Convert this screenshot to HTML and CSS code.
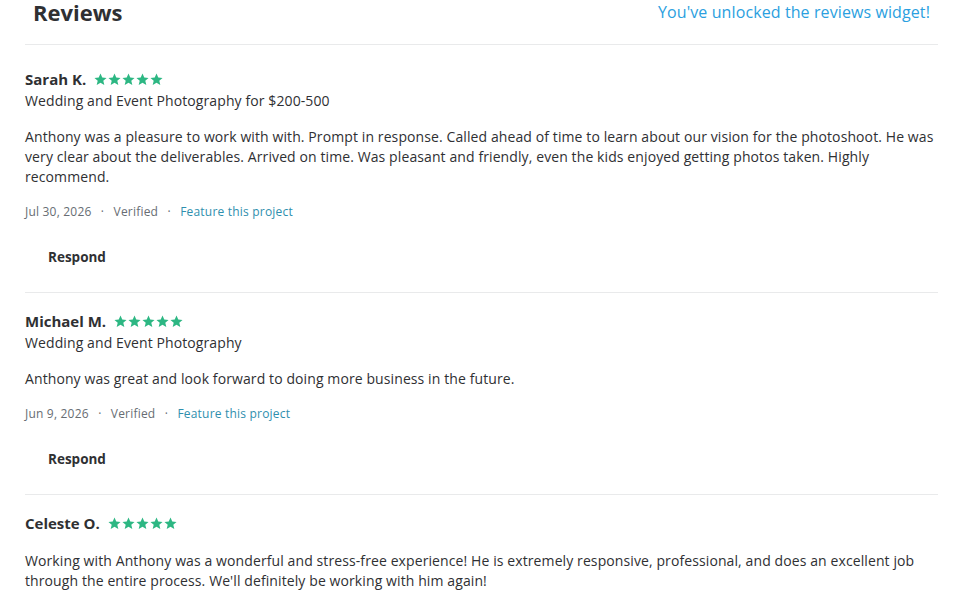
FILE: index.html
```html
<!DOCTYPE html>
<html lang="en">

<head>
  <meta charset="UTF-8">
  <meta name="viewport" content="width=device-width, initial-scale=1.0">
  <title>Reviews</title>
  <link rel="stylesheet" href="styles.css">
</head>

<body>
  <svg width="0" height="0" class="defs">
    <defs>
      <path id="star" d="M7 0.6l1.9 4.3 4.6 0.4-3.5 3 1.1 4.6L7 10.5 2.9 12.9 4 8.3 0.5 5.3l4.6-0.4z" />
    </defs>
  </svg>

  <div class="page">
    <div class="header">
      <h1>Reviews</h1>
      <span class="unlocked">You've unlocked the reviews widget!</span>
    </div>

    <div class="review first">
      <div class="name-row">
        <span class="name">Sarah K.</span>
        <span class="stars">
          <svg viewBox="0 0 14 14"><use href="#star" /></svg>
          <svg viewBox="0 0 14 14"><use href="#star" /></svg>
          <svg viewBox="0 0 14 14"><use href="#star" /></svg>
          <svg viewBox="0 0 14 14"><use href="#star" /></svg>
          <svg viewBox="0 0 14 14"><use href="#star" /></svg>
        </span>
      </div>
      <div class="service">Wedding and Event Photography for $200-500</div>
      <p class="text">Anthony was a pleasure to work with with. Prompt in response. Called ahead of time to learn about our vision for the photoshoot. He was very clear about the deliverables. Arrived on time. Was pleasant and friendly, even the kids enjoyed getting photos taken. Highly recommend.</p>
      <div class="meta">
        <span>Jul 30, 2026</span>
        <span class="dot">·</span>
        <span>Verified</span>
        <span class="dot">·</span>
        <a href="#">Feature this project</a>
      </div>
      <button class="respond">Respond</button>
    </div>

    <div class="review">
      <div class="name-row">
        <span class="name">Michael M.</span>
        <span class="stars">
          <svg viewBox="0 0 14 14"><use href="#star" /></svg>
          <svg viewBox="0 0 14 14"><use href="#star" /></svg>
          <svg viewBox="0 0 14 14"><use href="#star" /></svg>
          <svg viewBox="0 0 14 14"><use href="#star" /></svg>
          <svg viewBox="0 0 14 14"><use href="#star" /></svg>
        </span>
      </div>
      <div class="service">Wedding and Event Photography</div>
      <p class="text">Anthony was great and look forward to doing more business in the future.</p>
      <div class="meta">
        <span>Jun 9, 2026</span>
        <span class="dot">·</span>
        <span>Verified</span>
        <span class="dot">·</span>
        <a href="#">Feature this project</a>
      </div>
      <button class="respond">Respond</button>
    </div>

    <div class="review">
      <div class="name-row">
        <span class="name">Celeste O.</span>
        <span class="stars">
          <svg viewBox="0 0 14 14"><use href="#star" /></svg>
          <svg viewBox="0 0 14 14"><use href="#star" /></svg>
          <svg viewBox="0 0 14 14"><use href="#star" /></svg>
          <svg viewBox="0 0 14 14"><use href="#star" /></svg>
          <svg viewBox="0 0 14 14"><use href="#star" /></svg>
        </span>
      </div>
      <p class="text">Working with Anthony was a wonderful and stress-free experience! He is extremely responsive, professional, and does an excellent job through the entire process. We'll definitely be working with him again!</p>
    </div>
  </div>
</body>

</html>
```

FILE: styles.css
```css
body {
  font-family: 'Open Sans', 'Liberation Sans', sans-serif;
  margin: 0;
  background-color: #fff;
  color: #2f3033;
}

.defs {
  position: absolute;
}

.page {
  margin: 0 16px 0 25px;
}

.header {
  display: flex;
  justify-content: space-between;
  align-items: center;
  height: 24px;
  padding: 0 8px 20px 8px;
  border-bottom: 1px solid #e9eaeb;
}

h1 {
  margin: 0;
  font-size: 22px;
  font-weight: 700;
  line-height: 24px;
}

.unlocked {
  color: #2b9fe0;
  font-size: 16px;
  letter-spacing: 0.1px;
}

.review {
  padding: 16px 0 15px 0;
  border-bottom: 1px solid #e9eaeb;
}

.review.first {
  padding-top: 22px;
}

.name-row {
  display: flex;
  align-items: center;
  height: 24px;
}

.name {
  font-size: 15px;
  font-weight: 700;
  margin-right: 8px;
}

.stars {
  display: flex;
  gap: 1px;
  fill: #2db783;
}

.stars svg {
  width: 13px;
  height: 13px;
}

.service {
  font-size: 14px;
  line-height: 20px;
  letter-spacing: 0.1px;
}

.text {
  margin: 16px 0 0 0;
  font-size: 14px;
  line-height: 20px;
  letter-spacing: 0.1px;
}

.meta {
  margin-top: 16px;
  font-size: 12px;
  line-height: 18px;
  color: #676d73;
  letter-spacing: 0.2px;
}

.meta .dot {
  margin: 0 6px;
}

.meta a {
  color: #2f8fae;
  text-decoration: none;
}

.respond {
  display: block;
  margin-top: 16px;
  padding: 10px 23px;
  font-family: inherit;
  font-size: 13.5px;
  font-weight: 700;
  line-height: 20px;
  color: #2f3033;
  background: none;
  border: none;
  cursor: pointer;
}
```
